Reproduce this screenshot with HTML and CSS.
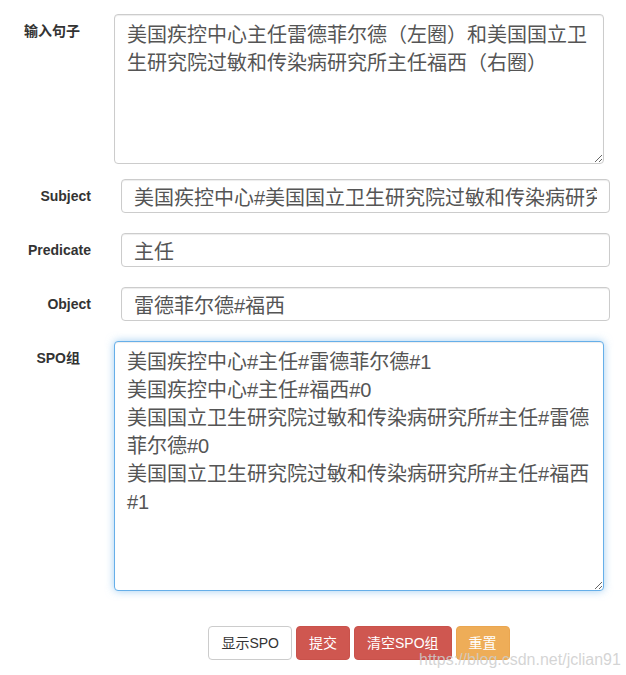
FILE: index.html
```html
<!DOCTYPE html>
<html lang="zh-CN">
<head>
<meta charset="utf-8">
<title>SPO</title>
<link rel="stylesheet" href="styles.css">
</head>
<body>
<form class="form">
  <div class="group group-area">
    <label class="label">输入句子</label>
    <textarea class="control area area-sentence">美国疾控中心主任雷德菲尔德（左圈）和美国国立卫生研究院过敏和传染病研究所主任福西（右圈）</textarea>
  </div>
  <div class="group group-input">
    <label class="label">Subject</label>
    <input class="control input" type="text" value="美国疾控中心#美国国立卫生研究院过敏和传染病研究所">
  </div>
  <div class="group group-input">
    <label class="label">Predicate</label>
    <input class="control input" type="text" value="主任">
  </div>
  <div class="group group-input">
    <label class="label">Object</label>
    <input class="control input" type="text" value="雷德菲尔德#福西">
  </div>
  <div class="group group-area">
    <label class="label">SPO组</label>
    <textarea class="control area area-spo focused">美国疾控中心#主任#雷德菲尔德#1
美国疾控中心#主任#福西#0
美国国立卫生研究院过敏和传染病研究所#主任#雷德菲尔德#0
美国国立卫生研究院过敏和传染病研究所#主任#福西#1</textarea>
  </div>
  <div class="group group-area">
    <span class="label"></span>
    <div class="actions">
      <button type="button" class="btn btn-default">显示SPO</button>
      <button type="button" class="btn btn-danger">提交</button>
      <button type="button" class="btn btn-danger">清空SPO组</button>
      <button type="button" class="btn btn-warning">重置</button>
    </div>
  </div>
</form>
<div class="watermark">https://blog.csdn.net/jclian91</div>
</body>
</html>
```

FILE: styles.css
```css
* { box-sizing: border-box; }

html, body {
  margin: 0;
  padding: 0;
  background: #fff;
}

body {
  position: relative;
  width: 626px;
  height: 675px;
  overflow: hidden;
  font-family: "Liberation Sans", "Noto Sans CJK SC", sans-serif;
  color: #333;
}

.form {
  padding-top: 14px;
  display: flex;
  flex-direction: column;
}

.group {
  display: grid;
  align-items: start;
}

.group-area {
  grid-template-columns: 80px 490px;
  column-gap: 34px;
}

.group-input {
  grid-template-columns: 91px 489px;
  column-gap: 30px;
  align-items: center;
  margin-top: 20px;
}

.label {
  text-align: right;
  font-size: 14px;
  font-weight: bold;
  line-height: 20px;
  color: #333;
}

.group-area .label {
  padding-top: 7px;
}

.control {
  display: block;
  width: 100%;
  border: 1px solid #ccc;
  border-radius: 4px;
  background: #fff;
  color: #555;
  font-family: "Liberation Sans", "Noto Sans CJK SC", sans-serif;
  font-size: 20px;
  line-height: 28px;
  padding: 6px 12px;
  box-shadow: inset 0 1px 1px rgba(0, 0, 0, 0.075);
  outline: none;
  margin: 0;
}

.area {
  resize: vertical;
  overflow: auto;
}

.area-sentence {
  height: 150px;
}

.group-area + .group-input {
  margin-top: 15px;
}

.group-input + .group-area {
  margin-top: 20px;
}

.area-spo {
  height: 250px;
}

.focused {
  border-color: #66afe9;
  box-shadow: inset 0 1px 1px rgba(0, 0, 0, 0.075), 0 0 8px rgba(102, 175, 233, 0.6);
}

.input {
  height: 34px;
  padding: 2px 12px;
}

.group-area + .group-area {
  margin-top: 35px;
}

.actions {
  display: flex;
  justify-content: center;
  gap: 4px;
}

.btn {
  display: inline-block;
  font-family: "Liberation Sans", "Noto Sans CJK SC", sans-serif;
  font-size: 14px;
  line-height: 20px;
  padding: 6px 12px;
  border: 1px solid transparent;
  border-radius: 4px;
  cursor: pointer;
}

.btn-default {
  background: #fff;
  border-color: #ccc;
  color: #333;
}

.btn-danger {
  background: #cf5750;
  border-color: #c9524b;
  color: #fff;
}

.btn-warning {
  background: #eead58;
  border-color: #eaa650;
  color: #fff;
}

.watermark {
  position: absolute;
  left: 419px;
  top: 650px;
  font-family: "Liberation Sans", sans-serif;
  font-size: 16px;
  line-height: 20px;
  color: rgba(205, 205, 205, 0.85);
  white-space: nowrap;
  pointer-events: none;
}
```
